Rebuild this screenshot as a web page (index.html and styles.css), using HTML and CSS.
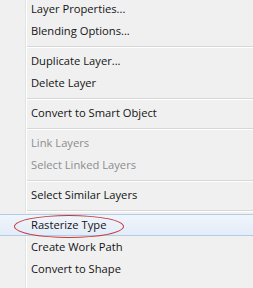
FILE: index.html
```html
<!DOCTYPE html>
<html lang="en">
<head>
    <meta charset="UTF-8" />
    <title>Layer Menu</title>
    <link rel="stylesheet" href="styles.css">
</head>
<body>
    <div class="menu">
        <div class="item">Layer Properties...</div>
        <div class="item">Blending Options...</div>
        <div class="sep"></div>
        <div class="item">Duplicate Layer...</div>
        <div class="item">Delete Layer</div>
        <div class="sep"></div>
        <div class="item">Convert to Smart Object</div>
        <div class="sep"></div>
        <div class="item disabled">Link Layers</div>
        <div class="item disabled">Select Linked Layers</div>
        <div class="sep"></div>
        <div class="item">Select Similar Layers</div>
        <div class="sep"></div>
        <div class="item active">
            Rasterize Type
            <span class="circle"></span>
        </div>
        <div class="item">Create Work Path</div>
        <div class="item">Convert to Shape</div>
    </div>
</body>
</html>
```

FILE: styles.css
```css
body {
    margin: 0;
    background-color: #f0f0f0;
    font-family: 'Open Sans', 'Noto Sans', sans-serif;
    font-size: 11.2px;
    color: #141414;
    overflow: hidden;
}

.menu {
    position: relative;
    margin-top: -2px;
    height: 300px;
    background: linear-gradient(to right, #f0f0f0 25px, #e2e3e3 25px, #e2e3e3 26px, #ffffff 26px, #ffffff 27px, #f0f0f0 27px);
}

.item {
    position: relative;
    height: 22px;
    line-height: 22px;
    padding-left: 31px;
}

.item.disabled {
    color: #8d8d8d;
}

.item.active {
    box-sizing: border-box;
    margin: 0 -3px;
    border: 1px solid #aecde8;
    border-radius: 2px;
    background: linear-gradient(to bottom, #f1f5fb, #e3ecf8);
    line-height: 20px;
    padding-left: 33px;
}

.sep {
    height: 8px;
    background: linear-gradient(to bottom, transparent 4px, #d7d7d7 4px, #d7d7d7 5px, #ffffff 5px, #ffffff 6px, transparent 6px);
    margin-left: 27px;
}

.circle {
    position: absolute;
    left: 16px;
    top: 0;
    width: 108px;
    height: 21px;
    border: 1px solid #c4383c;
    border-radius: 50%;
}
```
